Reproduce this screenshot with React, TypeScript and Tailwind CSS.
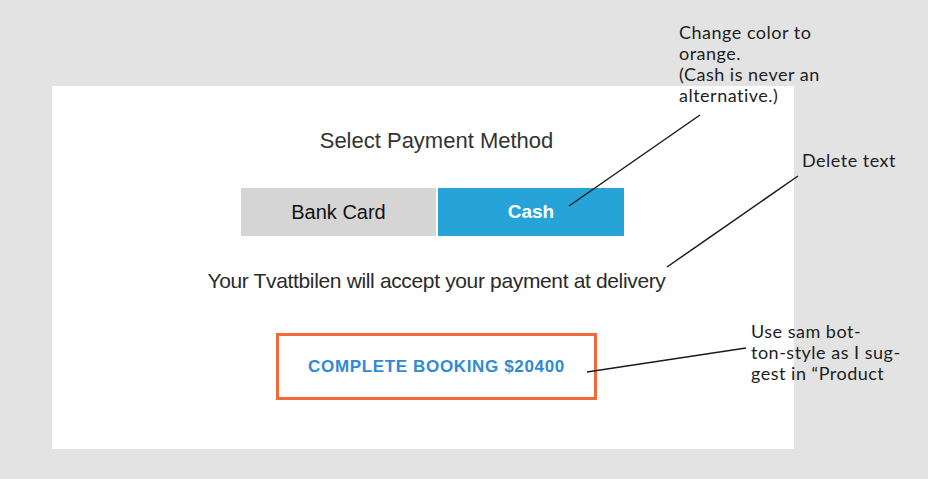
import React from "react";

export default function App() {
  const note = { fontFamily: "Lato, 'Open Sans', sans-serif" };
  return (
    <div className="relative w-[928px] h-[479px] bg-[#e3e3e3] overflow-hidden pt-[86px] pl-[52px]" style={{ fontFamily: "'Liberation Sans', Arial, sans-serif" }}>
      <div className="w-[742px] h-[363px] bg-white pl-[27px] flex flex-col items-center">
        <div className="mt-[42px] text-[22px] leading-[26px] text-[#333333]">Select Payment Method</div>
        <div className="mt-[34px] flex gap-[2px] mr-[8px]">
          <div className="w-[195px] h-[48px] bg-[#d5d5d5] flex items-center justify-center text-[20px] text-[#111111]">Bank Card</div>
          <div className="w-[186px] h-[48px] bg-[#26a4d7] flex items-center justify-center text-[19px] font-bold text-white">Cash</div>
        </div>
        <div className="mt-[33px] text-[21px] leading-[24px] tracking-[-0.35px] text-[#2a2a2a]">Your Tvattbilen will accept your payment at delivery</div>
        <div className="mt-[40px] w-[321px] h-[67px] border-[3px] border-[#f26a3c] flex items-center justify-center text-[17px] tracking-[0.65px] font-bold text-[#2f8ad4]">COMPLETE BOOKING $20400</div>
      </div>

      <svg className="absolute left-0 top-0" width="928" height="479" viewBox="0 0 928 479">
        <line x1="700" y1="115" x2="569" y2="206" stroke="#1a1a1a" strokeWidth="1.5" />
        <line x1="798" y1="176" x2="667" y2="267" stroke="#1a1a1a" strokeWidth="1.5" />
        <line x1="746" y1="348" x2="587" y2="372" stroke="#1a1a1a" strokeWidth="1.5" />
      </svg>

      <div className="absolute left-[679px] top-[22px] text-[18px] leading-[21px] tracking-[0.5px] text-[#1e1e1e]" style={note}>
        <div>Change color to</div>
        <div>orange.</div>
        <div>(Cash is never an</div>
        <div>alternative.)</div>
      </div>
      <div className="absolute left-[802px] top-[150px] text-[18px] leading-[21px] tracking-[0.5px] text-[#1e1e1e]" style={note}>
        Delete text
      </div>
      <div className="absolute left-[751px] top-[321px] text-[18px] leading-[21px] tracking-[0.5px] text-[#1e1e1e]" style={note}>
        <div>Use sam bot-</div>
        <div>ton-style as I sug-</div>
        <div>gest in “Product</div>
      </div>
    </div>
  );
}
